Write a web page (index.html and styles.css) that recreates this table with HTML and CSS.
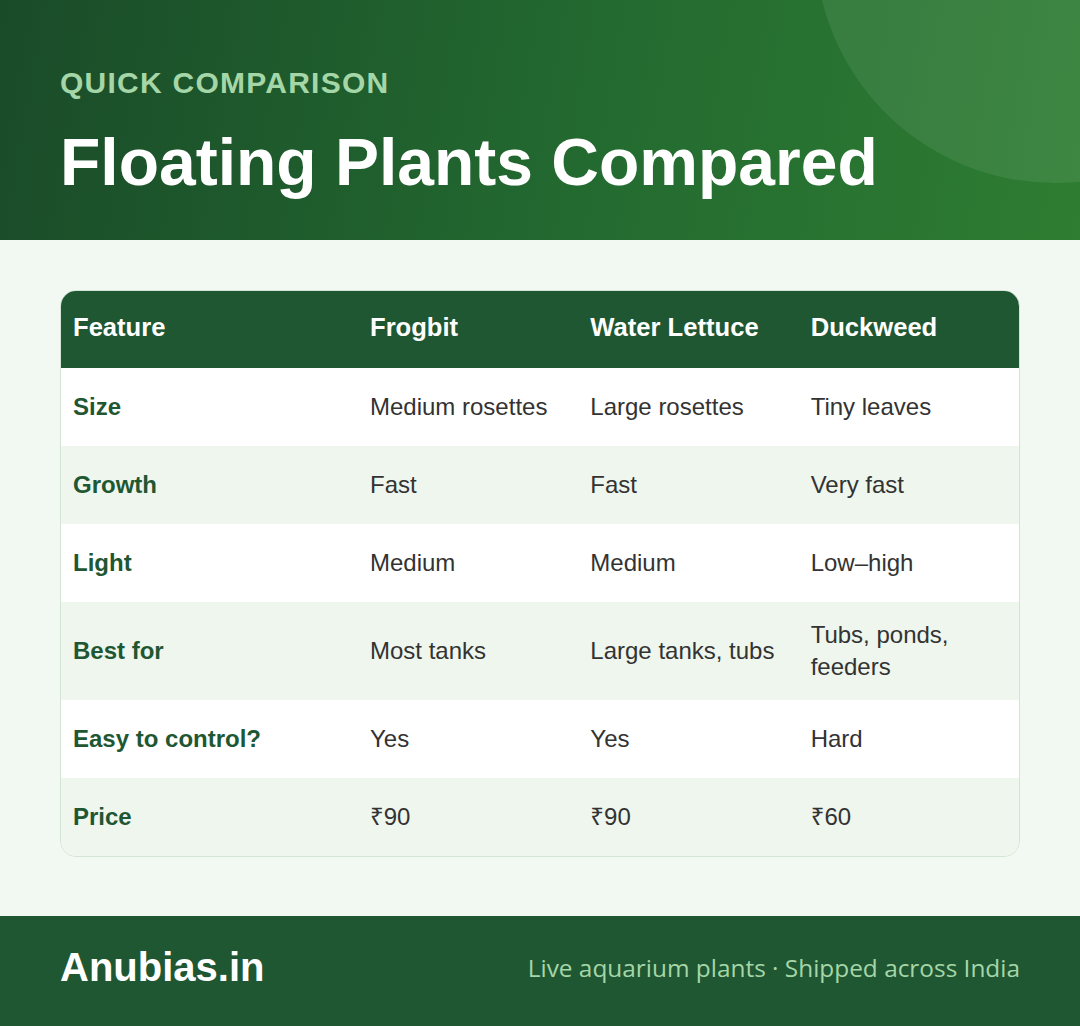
FILE: index.html
```html
<!DOCTYPE html>
<html lang="en">
<head>
<meta charset="utf-8">
<title>Floating Plants Compared</title>
<link rel="stylesheet" href="styles.css">
</head>
<body>
<header class="hero">
  <div class="hero-blob"></div>
  <p class="eyebrow">QUICK COMPARISON</p>
  <h1 class="title">Floating Plants Compared</h1>
</header>
<main class="content">
  <div class="card">
    <table class="cmp">
      <colgroup>
        <col class="c-feature"><col class="c-val"><col class="c-val"><col class="c-val">
      </colgroup>
      <thead>
        <tr><th>Feature</th><th>Frogbit</th><th>Water Lettuce</th><th>Duckweed</th></tr>
      </thead>
      <tbody>
        <tr><td class="feat">Size</td><td>Medium rosettes</td><td>Large rosettes</td><td>Tiny leaves</td></tr>
        <tr><td class="feat">Growth</td><td>Fast</td><td>Fast</td><td>Very fast</td></tr>
        <tr><td class="feat">Light</td><td>Medium</td><td>Medium</td><td>Low–high</td></tr>
        <tr><td class="feat">Best for</td><td>Most tanks</td><td>Large tanks, tubs</td><td>Tubs, ponds, feeders</td></tr>
        <tr><td class="feat">Easy to control?</td><td>Yes</td><td>Yes</td><td>Hard</td></tr>
        <tr><td class="feat">Price</td><td>₹90</td><td>₹90</td><td>₹60</td></tr>
      </tbody>
    </table>
  </div>
</main>
<footer class="foot">
  <div class="brand">Anubias.in</div>
  <div class="tagline">Live aquarium plants · Shipped across India</div>
</footer>
</body>
</html>
```
FILE: styles.css
```css
* { box-sizing: border-box; }
html, body { margin: 0; padding: 0; }
body {
  width: 1080px;
  height: 1026px;
  overflow: hidden;
  background: #f2f8f2;
  font-family: "Liberation Sans", "Noto Sans", Arial, sans-serif;
}
.hero {
  position: relative;
  overflow: hidden;
  height: 240px;
  padding: 65px 60px 0;
  background: linear-gradient(100deg, #1a4b29 0%, #236a30 55%, #2e7d32 100%);
}
.hero-blob {
  position: absolute;
  left: 815px;
  top: -297px;
  width: 480px;
  height: 480px;
  border-radius: 50%;
  background: rgba(255, 255, 255, 0.08);
}
.eyebrow {
  position: relative;
  margin: 0;
  font-size: 30px;
  line-height: 36px;
  font-weight: 700;
  letter-spacing: 1.25px;
  color: #a5d6a7;
}
.title {
  position: relative;
  margin: 22px 0 0;
  font-size: 66px;
  line-height: 79px;
  font-weight: 700;
  color: #ffffff;
}
.content {
  padding: 50px 60px 59px;
}
.card {
  border: 1px solid #d3e4d5;
  border-radius: 16px;
  overflow: hidden;
  background: #ffffff;
}
.cmp {
  width: 100%;
  border-collapse: collapse;
  table-layout: fixed;
}
.c-feature { width: 297px; }
.cmp th, .cmp td {
  text-align: left;
  vertical-align: middle;
  padding: 17px 12px;
  font-size: 24px;
  line-height: 32px;
}
.cmp thead tr { height: 77px; }
.cmp th {
  padding: 14px 12px 20px;
  background: #1f5733;
  color: #ffffff;
  font-size: 25.6px;
  font-weight: 700;
}
.cmp tbody tr { height: 78px; }
.cmp tbody tr:nth-child(even) { background: #eef6ee; }
.cmp td { color: #333333; }
.cmp td.feat { color: #1f5733; font-weight: 700; }
.foot {
  height: 110px;
  padding: 0 60px 7px;
  display: flex;
  align-items: center;
  justify-content: space-between;
  background: #1f5733;
}
.brand {
  font-size: 40px;
  font-weight: 700;
  color: #ffffff;
}
.tagline {
  font-family: "Open Sans", "Noto Sans", sans-serif;
  font-size: 24.4px;
  color: #a5d6a7;
}
```
